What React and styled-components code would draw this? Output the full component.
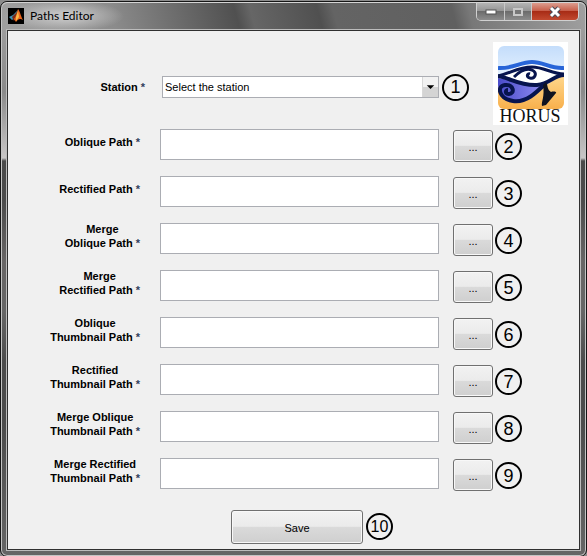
import React from "react";
import styled, { createGlobalStyle } from "styled-components";

const Global = createGlobalStyle`
  * { box-sizing: border-box; }
  body { margin: 0; padding-top: 1px; background: #8c8c8c; font: 11px/14px "Liberation Sans", Arial, sans-serif; color: #000; }
`;

const Window = styled.main`
  min-height: calc(100vh - 1px);
  display: flex;
  flex-direction: column;
  padding: 0 6px 6px;
  border: 1px solid #161616;
  border-radius: 7px;
  background: linear-gradient(180deg, #a5a5a5 0, #8a8a8a 90px, #c8c6c6 156px, #4a4a4a 159px, #4c4c4c 200px, #686666 260px, #666 310px, #4c4c4c 360px, #4c4c4c 420px, #666 100%);
  box-shadow: inset 0 0 0 1px #c4c4c4;
`;

const TitleBar = styled.header`
  display: flex;
  justify-content: space-between;
  height: 28px;
  margin: 0 -5px;
  padding: 0 6px;
  border-top: 1px solid #d4d4d4;
  border-radius: 6px 6px 0 0;
  background:
    radial-gradient(ellipse 60px 16px at 62px 13px, #c4c4c4 20%, transparent),
    linear-gradient(75deg, #a0a0a0 0, #8b8b8b 110px, #505050 230px, #666 245px, #505050 310px, #646464 325px, #606060 440px, #787878 80%, #a0a0a0 100%);
`;

const Title = styled.h1`
  display: flex;
  align-items: center;
  gap: 6px;
  margin: 0;
  padding-bottom: 1px;
  font: 12px/16px Lato, "Open Sans", sans-serif;
  svg { display: block; }
`;

const WindowButtons = styled.div`
  display: flex;
  height: 18px;
  border: 1px solid #d0d0d0;
  border-top: 0;
  border-radius: 0 0 5px 5px;
  overflow: hidden;
`;

const WindowButton = styled.button`
  display: grid;
  place-items: center;
  width: ${(p) => (p.$close ? 47 : 27)}px;
  padding: 0;
  border: 0;
  border-left: ${(p) => (p.$first ? 0 : 1)}px solid #c8c8c8;
  background: ${(p) =>
    p.$close
      ? "linear-gradient(#dc9c8e 0, #c8604c 45%, #a82c16 50%, #c24a30 100%)"
      : "linear-gradient(#b4b4b4 0, #969696 45%, #6c6c6c 50%, #8c8c8c 100%)"};
`;

const Panel = styled.form`
  flex: 1;
  display: flex;
  flex-direction: column;
  border: 1px solid #303030;
  outline: 1px solid #bcbcbc;
  background: #f0f0f0;
`;

const Top = styled.div`
  display: flex;
  align-items: flex-start;
  justify-content: space-between;
  gap: 24px;
  height: 97px;
  padding: 11px 11px 0 0;
`;

const StationRow = styled.div`
  flex: 1;
  display: grid;
  grid-template-columns: 137px 1fr 27px;
  align-items: center;
  padding-top: 31px;
`;

const Label = styled.label`
  justify-self: end;
  display: grid;
  place-content: center;
  min-height: 28px;
  font-weight: bold;
  text-align: center;
  white-space: pre-line;
  span { color: #30405c; }
`;

const SelectBox = styled.div`
  display: grid;
  margin: 0 3px 0 17px;
  border: 1px solid #abadb3;
  background: #fff;
  > * { grid-area: 1 / 1; }
  svg {
    justify-self: end;
    width: 16px;
    height: 20px;
    background: linear-gradient(#f2f2f2 50%, #d4d4d4 50%);
    border-left: 1px solid #d8d8d8;
    pointer-events: none;
  }
`;

const Select = styled.select`
  appearance: none;
  width: 100%;
  height: 20px;
  padding: 0 18px 0 2px;
  border: 0;
  background: transparent;
  color: #000;
  font: inherit;
`;

const Row = styled.div`
  display: grid;
  grid-template-columns: 132px 1fr 40px 29px;
  align-items: start;
  min-height: 47px;
  padding-right: 57px;
`;

const PathInput = styled.input`
  min-width: 0;
  height: 31px;
  margin: 1px 14px 0 20px;
  padding: 0 4px;
  border: 1px solid #abadb3;
  border-radius: 0;
  background: #fff;
  font: inherit;
`;

const Button = styled.button`
  width: ${(p) => (p.$wide ? 132 : 40)}px;
  height: ${(p) => (p.$wide ? 34 : 32)}px;
  margin-top: ${(p) => (p.$wide ? 0 : 2)}px;
  padding: 2px 0 0;
  border: 1px solid #707070;
  border-radius: 3px;
  background: linear-gradient(#f2f2f2 0, #ebebeb 48%, #dadada 50%, #cfcfcf 100%);
  box-shadow: inset 0 0 0 1px #f8f8f8;
  color: #000;
  font: inherit;
`;

const Circle = styled.span`
  display: grid;
  place-items: center;
  width: 27px;
  height: 27px;
  margin: ${(p) => (p.$row ? "5px 0 0 2px" : "0")};
  border: 2px solid #000;
  border-radius: 50%;
  font-size: ${(p) => (p.$small ? 16 : 18)}px;
  line-height: 22px;
`;

const Footer = styled.footer`
  display: flex;
  align-items: flex-start;
  justify-content: center;
  gap: 3px;
  padding: 6px 0 5px 37px;
  ${Circle} { margin-top: 3px; }
`;

const Logo = styled.svg`
  display: block;
  width: 75px;
  height: 83px;
  overflow: visible;
`;

const paths = [
  "Oblique Path",
  "Rectified Path",
  "Merge\nOblique Path",
  "Merge\nRectified Path",
  "Oblique\nThumbnail Path",
  "Rectified\nThumbnail Path",
  "Merge Oblique\nThumbnail Path",
  "Merge Rectified\nThumbnail Path",
];

function MatlabIcon() {
  return (
    <svg width="16" height="16" viewBox="0 0 16 16" aria-hidden="true">
      <rect width="16" height="16" fill="#000" />
      <path d="M1 9 5 7 8 4 10 2 7 10 4 12Z" fill="#3b91b5" />
      <path d="M4 9 8 5 10 2 8 10 6 13Z" fill="#7a2a18" />
      <path d="M10 1C12 3 13 9 15 12 12 10 10 11 8 14L6 11C8 9 9 5 10 1Z" fill="#e8641c" />
      <path d="M10 3 11 9 8 13 8 9Z" fill="#f8b848" />
    </svg>
  );
}

function HorusLogo() {
  return (
    <Logo viewBox="0 0 75 83" role="img" aria-label="HORUS">
      <defs>
        <linearGradient id="sky" x2="0" y2="1"><stop stopColor="#c4ddfb" /><stop offset="1" stopColor="#e8f4ff" /></linearGradient>
        <linearGradient id="sand" x2="0" y2="1"><stop stopColor="#ffd78c" /><stop offset="1" stopColor="#f8b04c" /></linearGradient>
        <linearGradient id="iris"><stop stopColor="#4a4ccb" /><stop offset="1" stopColor="#8f8cf0" /></linearGradient>
        <clipPath id="tile"><rect x="5" y="4" width="66" height="63" rx="6" /></clipPath>
      </defs>
      <rect width="75" height="83" fill="#fff" />
      <g clipPath="url(#tile)">
        <rect x="5" y="4" width="66" height="34" fill="url(#sky)" />
        <rect x="5" y="34" width="66" height="33" fill="url(#sand)" />
        <path d="M5 34C17 29 26 22 38 22 50 22 58 26 71 27V34C62 34 58 43 47 45 34 47 14 43 5 36Z" fill="#fff" />
        <path d="M5 36C16 37 26 44 50 44 41 54 29 61 18 60 8 58 4 49 5 36Z" fill="url(#iris)" />
        <path d="M5 26C20 27 27 20 39 20 51 20 57 27 71 26" fill="none" stroke="#2865d8" strokeWidth="4" />
        <path d="M5 34C18 31 25 25 39 25 51 25 59 32 71 32" fill="none" stroke="#07144e" strokeWidth="3" />
        <path d="M5 34C17 36 27 44 44 43 57 42 61 33 71 33" fill="none" stroke="#07144e" strokeWidth="4" />
        <path d="M21 35C27 29 34 26 39 28 45 31 42 37 37 36 33 35 34 31 37 32" fill="none" stroke="#07144e" strokeWidth="3" />
        <path d="M53 41C43 51 33 61 20 59 6 57 3 44 12 43 21 42 22 52 16 52 12 52 12 48 15 48" fill="none" stroke="#07144e" strokeWidth="4" />
        <path d="M53 40C55 43 54 48 58 50 61 49 64 50 63 51L53 63 49 64C48 60 52 55 50 43Z" fill="#101320" />
      </g>
      <text x="37" y="80" textAnchor="middle" fontFamily="Liberation Serif, serif" fontSize="18" fill="#111">HORUS</text>
    </Logo>
  );
}

export default function App() {
  return (
    <>
      <Global />
      <Window>
        <TitleBar>
          <Title><MatlabIcon />Paths Editor</Title>
          <WindowButtons>
            <WindowButton $first aria-label="Minimize">
              <svg width="12" height="6"><rect x="1" y="1" width="10" height="4" fill="#fff" stroke="#555" /></svg>
            </WindowButton>
            <WindowButton aria-label="Maximize" disabled>
              <svg width="12" height="10"><rect x="2" y="2" width="8" height="6" fill="#777" stroke="#c8c8c8" strokeWidth="2" /></svg>
            </WindowButton>
            <WindowButton $close aria-label="Close">
              <svg width="14" height="12" viewBox="0 0 14 12">
                <path d="M3 2 11 10M11 2 3 10" stroke="#4c4c58" strokeWidth="5" />
                <path d="M3 2 11 10M11 2 3 10" stroke="#fff" strokeWidth="3" />
              </svg>
            </WindowButton>
          </WindowButtons>
        </TitleBar>
        <Panel onSubmit={(e) => e.preventDefault()}>
          <Top>
            <StationRow>
              <Label htmlFor="station"><div>Station <span>*</span></div></Label>
              <SelectBox>
                <Select id="station"><option>Select the station</option></Select>
                <svg viewBox="0 0 16 20" aria-hidden="true"><path d="M4 8H12L8 12Z" /></svg>
              </SelectBox>
              <Circle>1</Circle>
            </StationRow>
            <HorusLogo />
          </Top>
          {paths.map((name, i) => (
            <Row key={name}>
              <Label htmlFor={`path-${i}`}><div>{name} <span>*</span></div></Label>
              <PathInput id={`path-${i}`} type="text" />
              <Button type="button" aria-label={`Browse ${name}`}>...</Button>
              <Circle $row>{i + 2}</Circle>
            </Row>
          ))}
          <Footer>
            <Button $wide type="submit">Save</Button>
            <Circle $small>10</Circle>
          </Footer>
        </Panel>
      </Window>
    </>
  );
}
